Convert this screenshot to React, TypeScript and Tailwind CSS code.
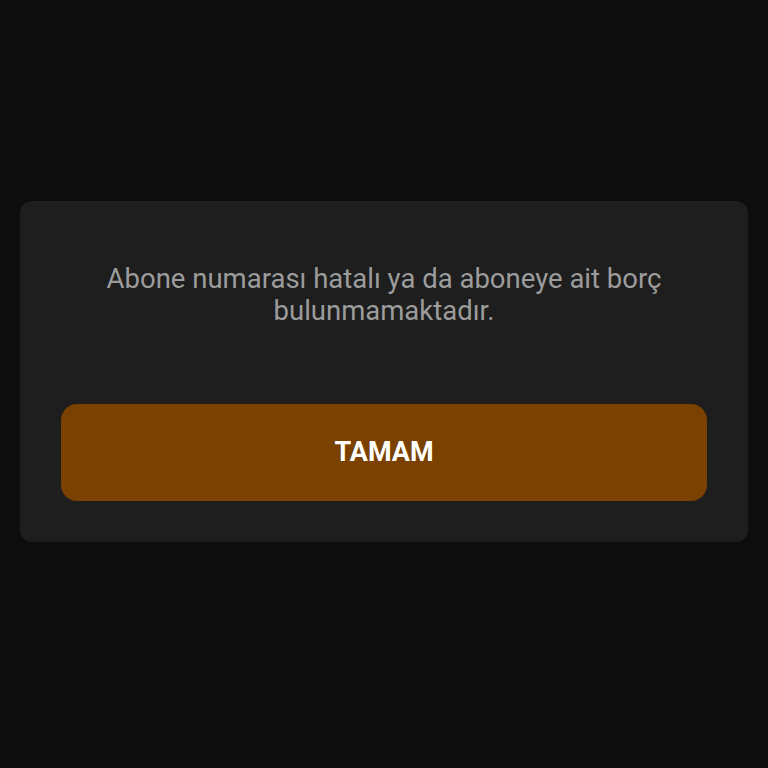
export default function App() {
  return (
    <div
      className="min-h-[768px] w-full bg-[#0d0d0d] px-[20px] pt-[201px]"
      style={{ fontFamily: "Roboto, 'Liberation Sans', sans-serif" }}
    >
      <div className="flex h-[341px] flex-col rounded-[12px] bg-[#1e1e1e] px-[41px] pb-[41px] pt-[62px]">
        <p className="px-[20px] text-center text-[27.5px] leading-[32px] text-[#9c9c9c]">
          Abone numarası hatalı ya da aboneye ait borç bulunmamaktadır.
        </p>
        <button
          type="button"
          className="mt-auto flex h-[97px] w-full items-center justify-center rounded-[16px] bg-[#7a4100] text-[27px] font-bold text-white"
        >
          TAMAM
        </button>
      </div>
    </div>
  );
}
